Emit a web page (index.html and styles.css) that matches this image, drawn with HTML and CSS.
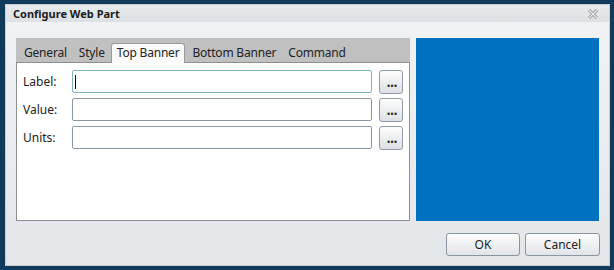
FILE: index.html
```html
<!DOCTYPE html>
<html lang="en">
  <head>
    <meta charset="UTF-8" />
    <title>Configure Web Part</title>
    <link rel="stylesheet" href="styles.css">
  </head>
  <body>
    <div class="dialog">
      <div class="title-bar">
        <span class="title">Configure Web Part</span>
        <svg class="close" width="10" height="10" viewBox="0 0 10 10">
          <path d="M1 1 L9 9 M9 1 L1 9" stroke="#8d9094" stroke-width="3" fill="none" />
          <path d="M1 1 L9 9 M9 1 L1 9" stroke="#eceef0" stroke-width="1.2" fill="none" />
        </svg>
      </div>

      <div class="dialog-body">
        <div class="panels">
          <div class="tab-panel">
            <div class="tabs">
              <div class="tab">General</div>
              <div class="tab">Style</div>
              <div class="tab active">Top Banner</div>
              <div class="tab">Bottom Banner</div>
              <div class="tab">Command</div>
            </div>
            <div class="tab-content">
              <div class="field">
                <label>Label:</label>
                <input type="text" class="focused" />
                <button class="more">...</button>
              </div>
              <div class="field">
                <label>Value:</label>
                <input type="text" />
                <button class="more">...</button>
              </div>
              <div class="field">
                <label>Units:</label>
                <input type="text" />
                <button class="more">...</button>
              </div>
            </div>
          </div>
          <div class="preview"></div>
        </div>

        <div class="actions">
          <button class="btn ok">OK</button>
          <button class="btn cancel">Cancel</button>
        </div>
      </div>
    </div>
  </body>
</html>
```

FILE: styles.css
```css
body {
  margin: 0;
  padding: 4px 0 0 5px;
  background: #0f3a5c;
  font-family: "Noto Sans", sans-serif;
  font-size: 12px;
  color: #222;
  height: 270px;
  box-sizing: border-box;
  overflow: hidden;
}

.dialog {
  width: 605px;
  height: 262px;
  box-sizing: border-box;
  border: 1px solid #c9cdd2;
  background: linear-gradient(#f2f3f5, #e3e6e9);
  display: flex;
  flex-direction: column;
}

.title-bar {
  height: 17px;
  background: linear-gradient(#e8eaed, #dde1e5);
  display: flex;
  align-items: center;
  justify-content: space-between;
  padding: 0 11px 0 7px;
}

.title {
  font-weight: bold;
  font-size: 11px;
  color: #1b1b1b;
}

.close {
  margin-top: 1px;
}

.dialog-body {
  padding: 16px 9px 0 10px;
  display: flex;
  flex-direction: column;
}

.panels {
  display: flex;
  gap: 6px;
  height: 183px;
}

.tab-panel {
  width: 394px;
  background: #c0c0c0;
  display: flex;
  flex-direction: column;
}

.tabs {
  height: 24px;
  display: flex;
  align-items: flex-end;
  padding-left: 2px;
  border-bottom: 1px solid #8e8e8e;
}

.tab {
  padding: 0 6px 2px;
  height: 19px;
  line-height: 17px;
  box-sizing: border-box;
  color: #222;
  margin-bottom: -1px;
  letter-spacing: -0.2px;
}

.tab.active {
  background: #fafafa;
  border: 1px solid #9a9a9a;
  border-bottom: none;
  border-radius: 3px 3px 0 0;
  height: 20px;
  padding: 0 5px;
  margin: 0 1px -1px 0;
  line-height: 18px;
}

.tab-content {
  flex: 1;
  background: #fff;
  border: 1px solid #8e8e8e;
  border-top: none;
  padding: 7px 6px 0 6px;
  display: flex;
  flex-direction: column;
  gap: 5px;
}

.field {
  display: flex;
  align-items: center;
  height: 23px;
}

.field label {
  width: 49px;
}

.field input {
  width: 301px;
  height: 23px;
  box-sizing: border-box;
  border: 1px solid #8c98a4;
  border-radius: 2px;
  padding: 0 3px;
  margin: 0 7px 0 0;
  font-family: "Noto Sans", sans-serif;
  font-size: 12px;
}

.field input.focused {
  border-color: #7fb3c4;
  background: linear-gradient(#000, #000) no-repeat 2px 4px / 1px 14px, #fff;
}

.more {
  width: 24px;
  height: 24px;
  border: 1px solid #8f9aa6;
  border-radius: 3px;
  background: linear-gradient(#fdfdfd, #dde1e6);
  font-family: "DejaVu Sans", sans-serif;
  font-size: 12px;
  font-weight: bold;
  letter-spacing: -1px;
  color: #333;
  padding: 3px 0 0 1px;
  line-height: 1;
}

.preview {
  width: 183px;
  height: 183px;
  background: #0070c0;
}

.actions {
  display: flex;
  justify-content: flex-end;
  gap: 5px;
  margin-top: 12px;
}

.btn {
  height: 23px;
  border: 1px solid #8b959f;
  border-radius: 3px;
  background: linear-gradient(#fdfdfd, #e1e4e8);
  font-family: "Noto Sans", sans-serif;
  font-size: 12px;
  color: #222;
  padding: 0;
}

.ok {
  width: 74px;
}

.cancel {
  width: 75px;
}
```
